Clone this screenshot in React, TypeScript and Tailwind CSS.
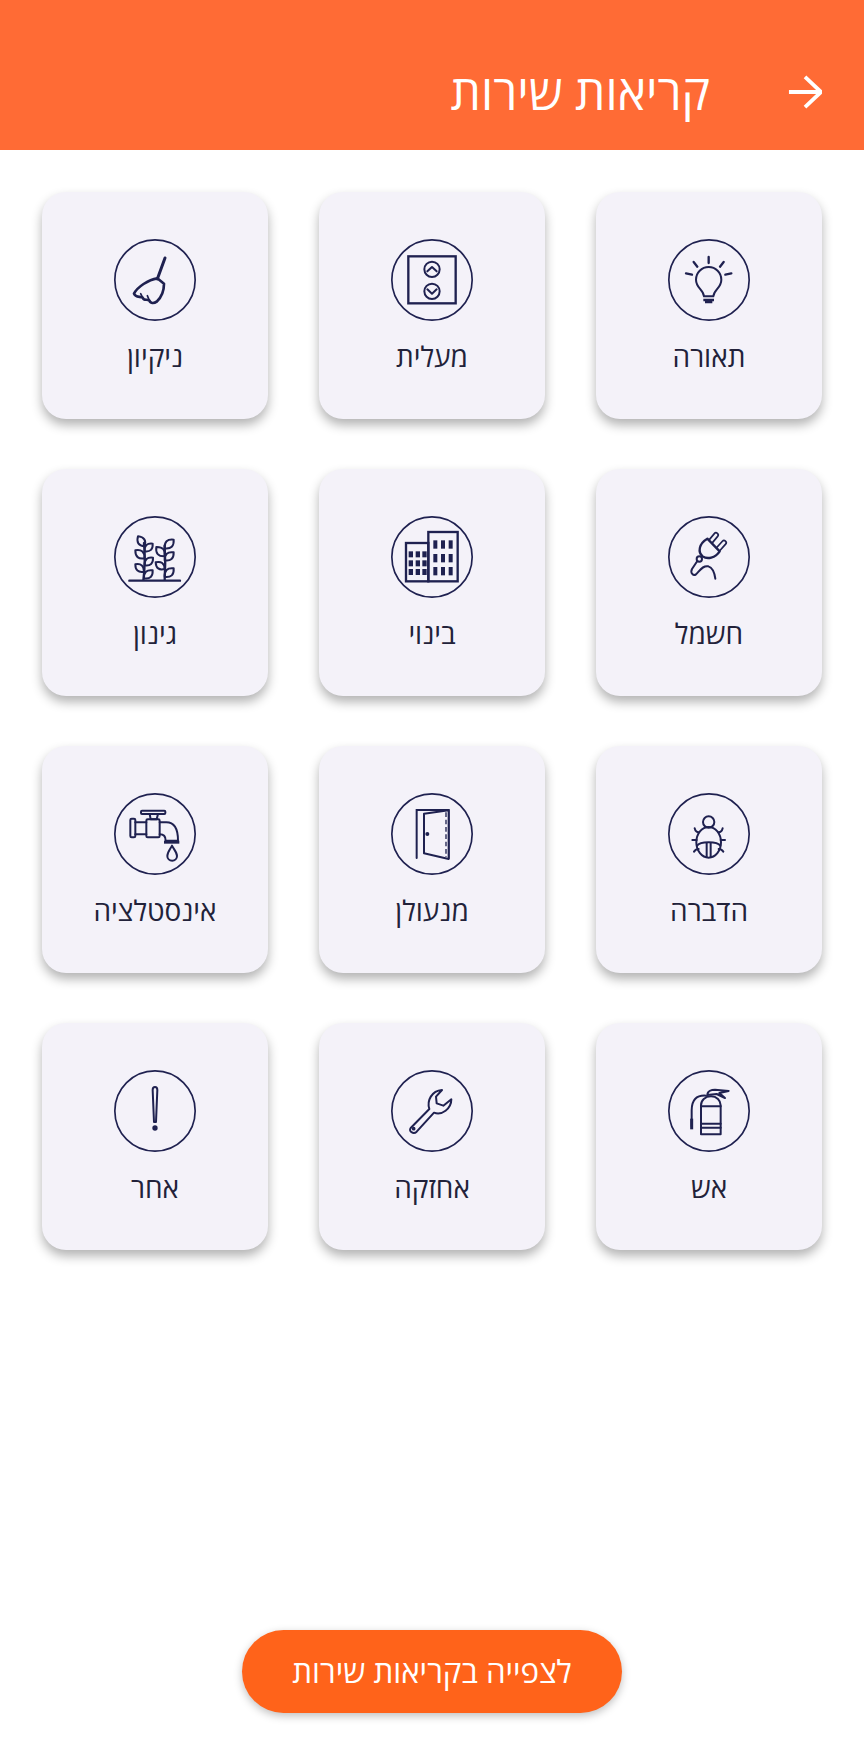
import React from 'react';

const ink = '#1f2150';
const cardBg = '#f4f2f9';

// Leaf outline between two points, with a bulge on each side
function Leaf({ a, b }: { a: number[]; b: number[] }) {
  const mx = (a[0] + b[0]) / 2;
  const my = (a[1] + b[1]) / 2;
  const dx = (b[1] - a[1]) * 0.6;
  const dy = (a[0] - b[0]) * 0.6;
  return (
    <path d={`M${a[0]} ${a[1]}Q${mx + dx} ${my + dy} ${b[0]} ${b[1]}Q${mx - dx} ${my - dy} ${a[0]} ${a[1]}Z`} />
  );
}

// Icons are drawn in 3x units, each viewBox is the ring's box
function Ring({ x, y, children }: { x: number; y: number; children?: React.ReactNode }) {
  return (
    <svg
      width="82"
      height="82"
      viewBox={`${x} ${y} 246 246`}
      fill="none"
      stroke={ink}
      strokeWidth="5"
      strokeLinecap="round"
      strokeLinejoin="round"
    >
      <circle cx={x + 123} cy={y + 123} r="120.5" />
      {children}
    </svg>
  );
}

const icons: Record<string, React.ReactNode> = {
  bulb: (
    <Ring x={54} y={43}>
      <path d="M162 215C160 195 138 190 138 165A38 38 0 0 1 214 165C214 190 192 195 190 215Z" strokeWidth="6" />
      <path d="M160 226H192M165 232H187" strokeWidth="7" strokeLinecap="butt" />
      <path d="M176 97V115M131 112L142 126M221 112L210 126M108 146L126 150M244 146L226 150" strokeWidth="7" />
    </Ring>
  ),
  elevator: (
    <Ring x={63} y={43}>
      <rect x="115" y="95" width="142" height="141" strokeWidth="7" strokeLinejoin="miter" />
      <circle cx="186" cy="134" r="23" strokeWidth="6" />
      <circle cx="186" cy="200" r="23" strokeWidth="6" />
      <path d="M172 140L186 127L200 140M172 194L186 207L200 194" strokeWidth="6" />
    </Ring>
  ),
  broom: (
    <Ring x={252} y={178}>
      <path d="M405 235L382 298" strokeWidth="9" />
      <path d="M382 296C355 300 322 322 312 342C316 354 330 350 338 354C342 364 350 358 358 362C360 372 372 372 380 366C395 352 402 335 402 312Z" strokeWidth="8" />
      <path d="M338 354L332 342M358 362L352 348" strokeWidth="5" />
    </Ring>
  ),
  plug: (
    <Ring x={54} y={49}>
      <path d="M183 124L198 106M205 148L222 129" stroke={ink} strokeWidth="18" />
      <path d="M183 124L198 106M205 148L222 129" stroke={cardBg} strokeWidth="8" />
      <path d="M172 117L209 155C196 175 172 180 158 170C143 158 146 132 172 117Z" fill={cardBg} strokeWidth="7" />
      <circle cx="148" cy="178" r="8" strokeWidth="6" />
      <path d="M142 184L126 208C120 220 130 230 138 224C150 212 160 196 175 200C188 204 194 222 196 237" strokeWidth="6" />
    </Ring>
  ),
  building: (
    <Ring x={63} y={49}>
      <g strokeWidth="7" strokeLinejoin="miter">
        <rect x="108" y="130" width="67" height="115" />
        <rect x="175" y="97" width="88" height="148" />
      </g>
      <g fill={ink} stroke="none">
        {[116, 137, 157].map((wx) =>
          [155, 182, 208].map((wy) => <rect key={`${wx}-${wy}`} x={wx} y={wy} width="13" height="18" />)
        )}
        {[190, 213, 236].map((wx) =>
          [122, 163, 202].map((wy) => <rect key={`${wx}-${wy}`} x={wx} y={wy} width="12" height="25" />)
        )}
      </g>
    </Ring>
  ),
  plants: (
    <Ring x={58} y={49}>
      <path d="M104 243H256M148 130C152 170 150 210 146 243M210 138C212 170 212 210 210 243" strokeWidth="7" />
      <g strokeWidth="6">
        <Leaf a={[150, 140]} b={[130, 110]} />
        <Leaf a={[150, 155]} b={[174, 132]} />
        <Leaf a={[150, 176]} b={[122, 152]} />
        <Leaf a={[150, 197]} b={[175, 174]} />
        <Leaf a={[148, 216]} b={[122, 194]} />
        <Leaf a={[148, 236]} b={[174, 212]} />
        <Leaf a={[210, 146]} b={[237, 120]} />
        <Leaf a={[210, 170]} b={[185, 142]} />
        <Leaf a={[210, 182]} b={[237, 158]} />
        <Leaf a={[210, 208]} b={[183, 188]} />
        <Leaf a={[210, 232]} b={[237, 206]} />
      </g>
    </Ring>
  ),
  bug: (
    <Ring x={54} y={54}>
      <circle cx="176" cy="141" r="17" strokeWidth="6" />
      <ellipse cx="176" cy="202" rx="37" ry="46" strokeWidth="6" />
      <path d="M141 212C150 198 202 198 211 212" strokeWidth="6" />
      <path d="M170 204V246M182 204V246" strokeWidth="6" />
      <path d="M146 172C140 172 136 168 134 160M140 195H127M146 222C140 222 136 224 132 230M206 172C212 172 216 168 218 160M212 195H225M206 222C212 222 216 224 220 230" strokeWidth="6" />
    </Ring>
  ),
  door: (
    <Ring x={63} y={54}>
      <path d="M140 249V105H236V250" strokeWidth="6" strokeLinejoin="miter" />
      <path d="M162 116L236 106V252L162 235Z" strokeWidth="6" fill={cardBg} />
      <path d="M228 112V246" strokeWidth="4" strokeDasharray="14 8" strokeLinecap="butt" />
      <circle cx="172" cy="177" r="6" fill={ink} stroke="none" />
    </Ring>
  ),
  faucet: (
    <Ring x={58} y={54}>
      <g strokeWidth="6">
        <rect x="139" y="107" width="73" height="10" rx="3" />
        <path d="M165 117L168 133H186L190 117" />
        <rect x="155" y="133" width="40" height="54" rx="4" />
        <path d="M122 142H155M122 178H155" />
        <rect x="107" y="131" width="15" height="56" rx="4" />
        <path d="M195 142H215C240 142 250 162 250 197H213C213 185 208 178 195 178" />
        <path d="M218 243C218 232 226 224 232 212C238 224 247 232 247 243A14.5 14.5 0 0 1 218 243Z" />
      </g>
      <rect x="208" y="197" width="46" height="9" fill={ink} stroke="none" />
    </Ring>
  ),
  wrench: (
    <Ring x={63} y={58}>
      <path d="M122 232L178 175C170 150 185 120 216 118L198 138L200 158L220 165L244 146C244 175 215 195 192 186L140 243C130 252 115 242 122 232Z" strokeWidth="6" />
      <circle cx="131" cy="234" r="3" />
    </Ring>
  ),
  fire: (
    <Ring x={54} y={59}>
      <g strokeWidth="6">
        <path d="M153 252V165C153 150 165 138 183 138C200 138 212 150 212 165V252Z" />
        <path d="M153 168H212M153 220H212M153 232H212" />
        <path d="M172 134C172 122 185 118 195 118L236 122L208 128L225 143L200 131L172 134" />
        <path d="M168 136C138 134 125 150 125 180V228" />
      </g>
      <path d="M125 205V237" strokeWidth="9" strokeLinecap="butt" />
    </Ring>
  ),
  other: (
    <Ring x={0} y={0}>
      <path d="M116 60C116 48 130 48 130 60L126 156H120Z" strokeWidth="6" />
      <circle cx="123" cy="174" r="8" fill={ink} stroke="none" />
    </Ring>
  ),
};

const services = [
  { label: 'תאורה', icon: 'bulb' },
  { label: 'מעלית', icon: 'elevator' },
  { label: 'ניקיון', icon: 'broom' },
  { label: 'חשמל', icon: 'plug' },
  { label: 'בינוי', icon: 'building' },
  { label: 'גינון', icon: 'plants' },
  { label: 'הדברה', icon: 'bug' },
  { label: 'מנעולן', icon: 'door' },
  { label: 'אינסטלציה', icon: 'faucet' },
  { label: 'אש', icon: 'fire' },
  { label: 'אחזקה', icon: 'wrench' },
  { label: 'אחר', icon: 'other' },
];

export default function App() {
  return (
    <div dir="rtl" className="flex h-[1748px] w-[864px] flex-col bg-white font-['Open_Sans','DejaVu_Sans',sans-serif]">
      <header className="flex h-[150px] items-start gap-[78px] bg-[#ff6b35] pr-[42px] pt-[61px] text-white">
        <svg width="34" height="34" viewBox="0 0 36 34" fill="none" stroke="white" strokeWidth="4" className="mt-[14px]">
          <path d="M1 17H34M18 1L35 17L18 33" />
        </svg>
        <h1 className="text-[48px] leading-[62px] font-normal">קריאות שירות</h1>
      </header>

      <div className="grid grid-cols-3 gap-x-[51px] gap-y-[50px] px-[42px] pt-[42px]">
        {services.map((s) => (
          <div
            key={s.label}
            className="flex h-[227px] flex-col items-center rounded-[24px] bg-[#f4f2f9] pt-[47px] shadow-[0_6px_11px_rgba(0,0,0,0.3)]"
          >
            {icons[s.icon]}
            <span className="mt-[16px] text-[28px] leading-[38px] text-[#22223a]">{s.label}</span>
          </div>
        ))}
      </div>

      <button className="mx-auto mb-[35px] mt-auto flex h-[83px] w-[380px] items-center justify-center rounded-full bg-[#ff631a] text-[31.3px] text-white shadow-[0_3px_8px_rgba(0,0,0,0.25)]">
        לצפייה בקריאות שירות
      </button>
    </div>
  );
}
